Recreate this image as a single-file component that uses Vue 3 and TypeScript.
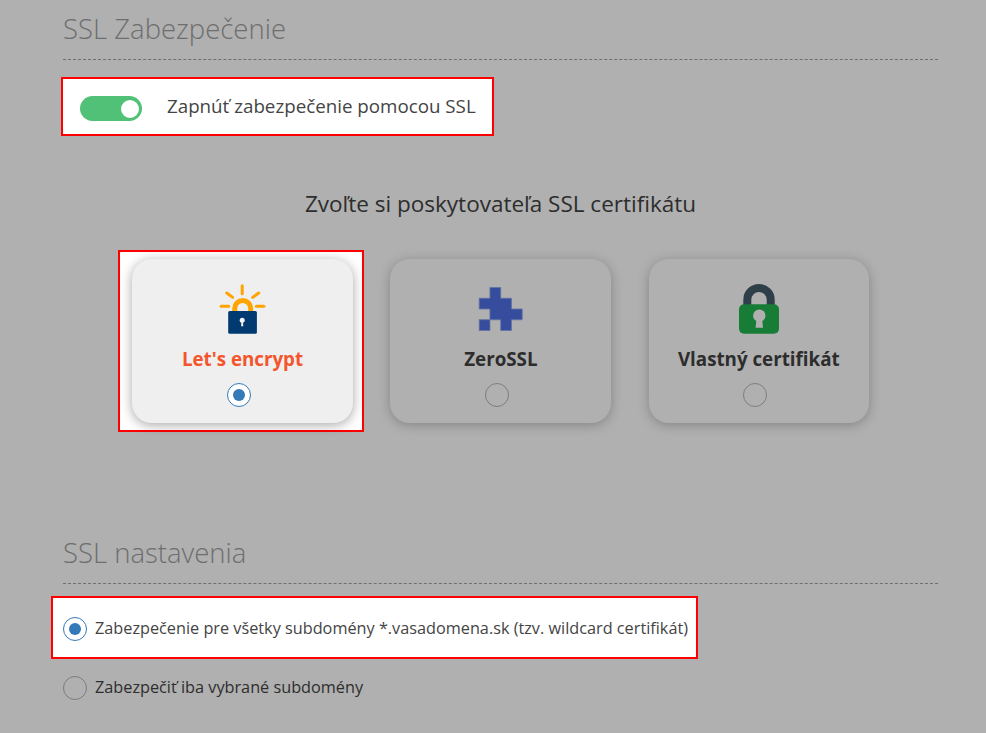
<script setup lang="ts">
const rays: [number, number, number, number][] = [
  [24.8, 1.8, 24.8, 9.8],
  [3.7, 22.3, 11.3, 22.3],
  [39, 22.3, 46.5, 22.3],
  [9.3, 9, 15.3, 13.4],
  [41.3, 9, 35.3, 13.4],
]
</script>

<template>
  <main class="page">
    <h2 class="section-title">SSL Zabezpečenie</h2>

    <div class="highlight switch-row">
      <span class="switch"><span class="knob"></span></span>
      <span class="switch-label">Zapnúť zabezpečenie pomocou SSL</span>
    </div>

    <h3 class="provider-title">Zvoľte si poskytovateľa SSL certifikátu</h3>

    <div class="cards">
      <div class="highlight card-highlight">
        <div class="card card-active">
          <svg class="icon" viewBox="0.6 0 50 50" aria-hidden="true">
            <line
              v-for="(r, i) in rays"
              :key="i"
              :x1="r[0]"
              :y1="r[1]"
              :x2="r[2]"
              :y2="r[3]"
              stroke="#ffa400"
              stroke-width="3"
              stroke-linecap="round"
            />
            <path d="M17.3 28V24.5A8 8 0 0 1 33.3 24.5V28" fill="none" stroke="#ffa400" stroke-width="5" />
            <rect x="10.8" y="27" width="28.7" height="22.7" rx="1.5" fill="#003a70" />
            <circle cx="24.8" cy="36.3" r="2.5" fill="#f2f2f2" />
            <path d="M24 37.5H25.6L25.9 42.2H23.7Z" fill="#f2f2f2" />
          </svg>
          <span class="card-label label-active">Let's encrypt</span>
          <span class="radio radio-on card-radio"><span class="dot"></span></span>
        </div>
      </div>

      <div class="card">
        <svg class="icon" viewBox="0.8 0 50 50" aria-hidden="true">
          <path
            d="M14.75 3.5H25.5V14.25H36.25V25H47V35.75H36.25V46.5H25.5V35.75H14.75V25H4V14.25H14.75Z"
            fill="#354d9c"
            stroke="#6272a4"
            stroke-width="0.8"
          />
          <rect x="4" y="35.75" width="10.75" height="10.75" fill="#354d9c" stroke="#6272a4" stroke-width="0.8" />
        </svg>
        <span class="card-label">ZeroSSL</span>
        <span class="radio card-radio"></span>
      </div>

      <div class="card">
        <svg class="icon" viewBox="0 0 50 50" aria-hidden="true">
          <path d="M13.3 22V15.7A11.7 11.7 0 0 1 36.7 15.7V22" fill="none" stroke="#2f3f49" stroke-width="8" />
          <rect x="5" y="20.3" width="40" height="29.4" rx="5" fill="#177c35" />
          <circle cx="25.3" cy="31.7" r="6.2" fill="#b0b0b0" />
          <path d="M22.6 34H28L29 43.7H21.6Z" fill="#b0b0b0" />
        </svg>
        <span class="card-label">Vlastný certifikát</span>
        <span class="radio card-radio"></span>
      </div>
    </div>

    <h2 class="section-title settings-title">SSL nastavenia</h2>

    <div class="highlight option-highlight">
      <span class="radio radio-on option-radio"><span class="dot"></span></span>
      <span class="option-label">Zabezpečenie pre všetky subdomény *.vasadomena.sk (tzv. wildcard certifikát)</span>
    </div>

    <div class="option">
      <span class="radio"></span>
      <span class="option-label option-dim">Zabezpečiť iba vybrané subdomény</span>
    </div>
  </main>
</template>

<style>
html,
body {
  margin: 0;
  background: #b0b0b0;
}
</style>

<style scoped>
.page {
  box-sizing: border-box;
  width: 986px;
  height: 733px;
  padding: 0 48px 0 63px;
  overflow: hidden;
  font-family: "Open Sans", "Liberation Sans", sans-serif;
  color: #2d2d2d;
}

.section-title {
  margin: 0;
  padding: 10px 0 11px 0;
  border-bottom: 1px dashed #6f6f6f;
  font-size: 27.5px;
  font-weight: 300;
  line-height: 38px;
  color: #6e6e6e;
}

.highlight {
  box-sizing: border-box;
  border: 2px solid #ff0000;
  background: #fff;
}

.switch-row {
  display: flex;
  align-items: center;
  gap: 25px;
  width: 433px;
  height: 59px;
  margin: 17px 0 0 -2px;
  padding-left: 17px;
}

.switch {
  display: flex;
  align-items: center;
  justify-content: flex-end;
  box-sizing: border-box;
  width: 62px;
  height: 25px;
  margin-top: 4px;
  padding-right: 3px;
  border-radius: 13px;
  background: #52c178;
}

.knob {
  width: 18px;
  height: 18px;
  border-radius: 50%;
  background: #fff;
}

.switch-label {
  margin-top: -2px;
  font-size: 18.75px;
  line-height: 24px;
  color: #444;
}

.provider-title {
  margin: 53px 0 0;
  font-size: 22.5px;
  font-weight: 400;
  line-height: 30px;
  text-align: center;
}

.cards {
  display: grid;
  grid-template-columns: 221px 221px 220px;
  column-gap: 37.4px;
  margin: 40px 0 0 69px;
}

.card-highlight {
  margin: -9px -11px -9px -14px;
  padding: 7px 9px 7px 12px;
}

.card {
  display: flex;
  flex-direction: column;
  align-items: center;
  box-sizing: border-box;
  height: 164px;
  padding-top: 25px;
  border-radius: 20px;
  background: #b0b0b0;
  box-shadow: 0 2px 12px rgba(0, 0, 0, 0.25);
}

.card-active {
  background: #efefef;
  box-shadow: 0 2px 12px rgba(0, 0, 0, 0.35);
}

.icon {
  display: block;
  width: 50px;
  height: 50px;
}

.card-label {
  margin-top: 12px;
  font-size: 18.75px;
  font-weight: 700;
  line-height: 26px;
}

.label-active {
  color: #f4552d;
}

.radio {
  display: flex;
  flex: none;
  align-items: center;
  justify-content: center;
  box-sizing: border-box;
  width: 24px;
  height: 24px;
  border: 1px solid #7d7d7d;
  border-radius: 50%;
}

.radio-on {
  border-color: #337ab7;
  background: #fff;
}

.dot {
  width: 12px;
  height: 12px;
  border-radius: 50%;
  background: #337ab7;
}

.card-radio {
  margin: 11px 7px 0 0;
}

.settings-title {
  margin-top: 101px;
}

.option-highlight {
  display: flex;
  align-items: center;
  gap: 8px;
  width: 647px;
  height: 63px;
  margin: 12px 0 0 -12px;
  padding-left: 10px;
}

.option-radio {
  margin-top: 2px;
}

.option {
  display: flex;
  align-items: center;
  gap: 8px;
  margin-top: 17px;
}

.option-label {
  font-size: 16.25px;
  line-height: 24px;
  color: #444;
}

.option-dim {
  margin-top: -2px;
  color: #2d2d2d;
}
</style>
